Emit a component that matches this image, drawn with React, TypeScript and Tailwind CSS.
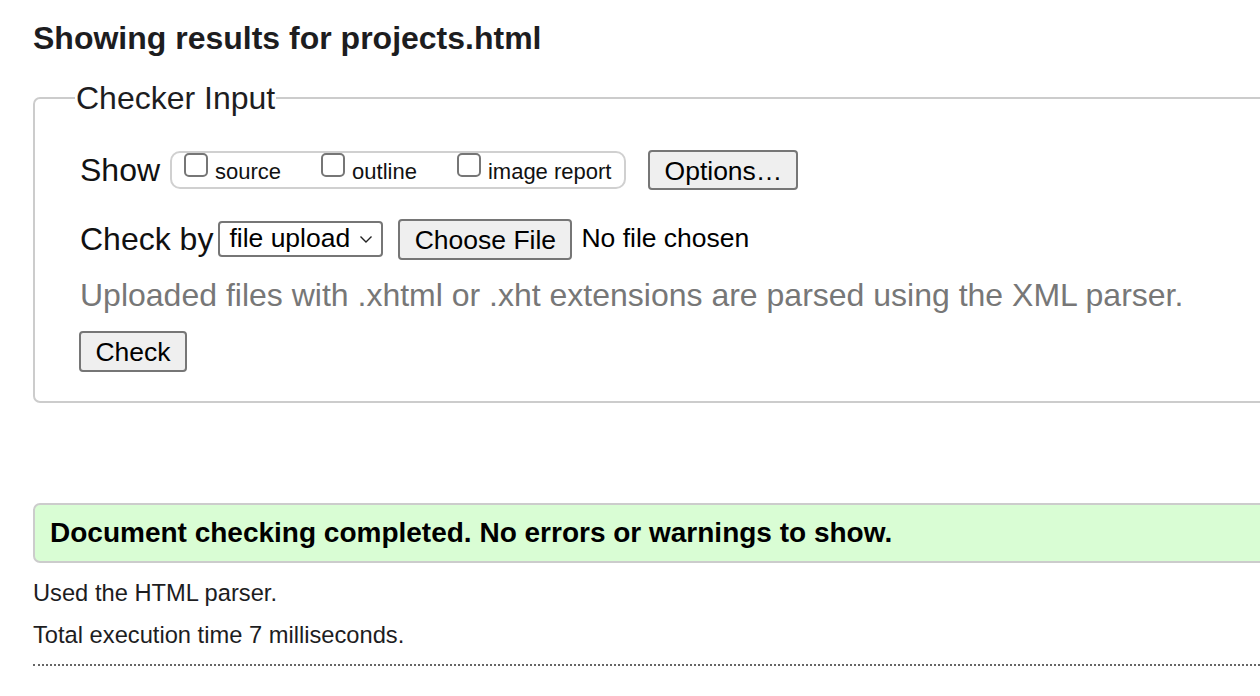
export default function App() {
  const boxes = ["source", "outline", "image report"];

  return (
    <div className="w-full h-[696px] overflow-hidden bg-white text-[#111] font-['Liberation_Sans',Arial,sans-serif]">
      <div className="w-[1320px] pl-[33px]">
        <h2 className="pt-[19px] h-[56px] text-[32px] leading-[38px] font-bold text-[#1d1d1f]">Showing results for projects.html</h2>

        <fieldset className="mt-[24px] border-2 border-[#cccccc] rounded-[7px] pl-[45px] pr-4 pb-[29px] pt-[0px]">
          <legend className="ml-[-5px] px-[1px] text-[32px] leading-[36px] text-[#1d1d1f]">Checker Input</legend>

          <div className="mt-[33px] flex items-center h-[42px]">
            <span className="text-[32px] mr-[10px]">Show</span>
            <div className="h-[38px] flex items-center border-2 border-[#d0d0d0] rounded-[10px] pl-[12px] pr-[13px]">
              {boxes.map((b, i) => (
                <label key={b} className={"flex items-center " + (i < 2 ? "mr-[40px]" : "")}>
                  <span className="w-[24px] h-[24px] border-2 border-[#767676] rounded-[5px] mr-[7px] -mt-[10px]" />
                  <span className="text-[22px] leading-[26px] mt-[4px]">{b}</span>
                </label>
              ))}
            </div>
            <button className="ml-[22px] h-[40px] w-[150px] border-2 border-[#767676] rounded-[4px] bg-[#efefef] text-[26.5px] text-black">Options…</button>
          </div>

          <div className="mt-[27px] flex items-center h-[42px]">
            <span className="text-[32px] mr-[5px]">Check by</span>
            <div className="h-[36px] w-[165px] flex items-center justify-between border-2 border-[#767676] rounded-[4px] pl-[9px] pr-[8px] text-[26.5px] text-black">
              <span>file upload</span>
              <svg width="14" height="9" viewBox="0 0 14 9" fill="none" stroke="#222" strokeWidth="1.4"><path d="M1.5 1.5 7 7l5.5-5.5" /></svg>
            </div>
            <button className="ml-[15px] h-[41px] w-[174px] border-2 border-[#767676] rounded-[4px] bg-[#efefef] text-[26.5px] text-black">Choose File</button>
            <span className="ml-[9px] text-[26.5px] text-black">No file chosen</span>
          </div>

          <p className="mt-[17px] text-[32px] leading-[37px] text-[#777777]">Uploaded files with .xhtml or .xht extensions are parsed using the XML parser.</p>

          <button className="mt-[17px] -ml-[1px] h-[41px] w-[108px] border-2 border-[#767676] rounded-[4px] bg-[#efefef] text-[26.5px] text-black">Check</button>
        </fieldset>

        <div className="mt-[100px] h-[60px] flex items-center border-2 border-[#cccccc] rounded-[7px] bg-[#d9fdd4] pl-[15px]">
          <p className="text-[28px] font-bold text-black">Document checking completed. No errors or warnings to show.</p>
        </div>

        <p className="mt-[17px] text-[23.7px] leading-[26px] text-[#1d1d1f]">Used the HTML parser.</p>
        <p className="mt-[16px] text-[23.7px] leading-[26px] text-[#1d1d1f]">Total execution time 7 milliseconds.</p>
        <div className="mt-[16px] border-t-2 border-dotted border-[#666666]" />
      </div>
    </div>
  );
}
